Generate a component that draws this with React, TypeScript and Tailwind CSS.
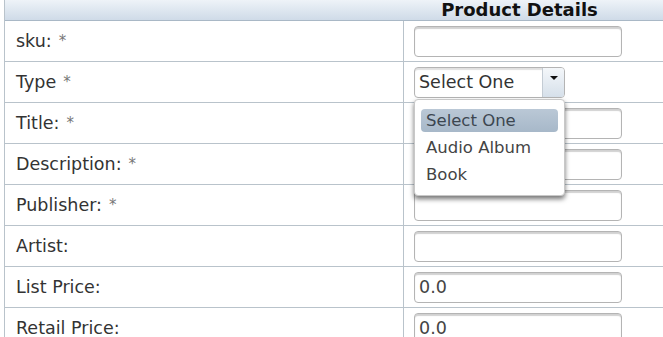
import React from 'react';

interface Field {
  label: string;
  required?: boolean;
  kind: 'text' | 'select';
  value?: string;
}

const fields: Field[] = [
  { label: 'sku:', required: true, kind: 'text' },
  { label: 'Type', required: true, kind: 'select' },
  { label: 'Title:', required: true, kind: 'text' },
  { label: 'Description:', required: true, kind: 'text' },
  { label: 'Publisher:', required: true, kind: 'text' },
  { label: 'Artist:', kind: 'text' },
  { label: 'List Price:', kind: 'text', value: '0.0' },
  { label: 'Retail Price:', kind: 'text', value: '0.0' },
];

const options = ['Select One', 'Audio Album', 'Book'];

const TextBox: React.FC<{ value?: string }> = ({ value }) => (
  <div className="w-[208px] h-[31px] rounded-[4px] border border-[#b4b4b4] bg-white shadow-[inset_0_2px_1px_rgba(0,0,0,0.18)] px-[4px] flex items-center text-[17.5px] text-[#444]">
    {value}
  </div>
);

const SelectBox: React.FC = () => (
  <div className="relative">
    <div className="w-[151px] h-[31px] rounded-[4px] border border-[#b4b4b4] bg-white flex overflow-hidden shadow-[inset_0_2px_1px_rgba(0,0,0,0.12)]">
      <div className="flex-1 flex items-center px-[4px] text-[17.5px] text-[#333] whitespace-nowrap">Select One</div>
      <div className="w-[22px] shrink-0 border-l border-[#c4ccd4] bg-gradient-to-b from-[#f4f7fa] to-[#d6e0ea] flex justify-center pt-[8px]">
        <div className="w-0 h-0 border-l-[4px] border-r-[4px] border-t-[4px] border-l-transparent border-r-transparent border-t-[#111]" />
      </div>
    </div>
    <div className="absolute left-0 top-[32px] z-10 w-[151px] h-[97px] bg-white rounded-[4px] border border-[#c8c8c8] shadow-[0_3px_5px_rgba(0,0,0,0.55)] pt-[9px] px-[6px]">
      {options.map((o, i) => (
        <div
          key={o}
          className={
            i === 0
              ? 'h-[23px] rounded-[4px] bg-gradient-to-b from-[#bac8d6] to-[#a7b8c9] px-[5px] leading-[23px] text-[16.5px] text-[#3c4650] mb-[4px] whitespace-nowrap'
              : 'h-[23px] px-[5px] leading-[23px] text-[16.5px] text-[#444] mb-[4px] whitespace-nowrap'
          }
        >
          {o}
        </div>
      ))}
    </div>
  </div>
);

export default function App() {
  return (
    <div
      className="w-[663px] h-[337px] overflow-hidden bg-white"
      style={{ fontFamily: 'Verdana, "DejaVu Sans", sans-serif' }}
    >
      <div className="ml-[4px] w-[1030px] border-l border-[#b9c3cb]">
        <div className="h-[21px] bg-gradient-to-b from-[#eef3f8] to-[#cfdbe8] border-b border-[#a9b8c6] flex justify-center">
          <span className="text-[18px] font-bold text-[#111] leading-[19px]">Product Details</span>
        </div>
        {fields.map((f) => (
          <div key={f.label} className="flex h-[41px] border-b border-[#b9c3cb]">
            <div className="w-[399px] border-r border-[#b9c3cb] pl-[11px] flex items-center text-[17.5px] text-[#333]">
              <span>{f.label}</span>
              {f.required && <span className="ml-[7px] text-[15px] text-[#777] self-start mt-[9px]">*</span>}
            </div>
            <div className="flex-1 pl-[10px] pt-[5px]">
              {f.kind === 'select' ? <SelectBox /> : <TextBox value={f.value} />}
            </div>
          </div>
        ))}
      </div>
    </div>
  );
}
